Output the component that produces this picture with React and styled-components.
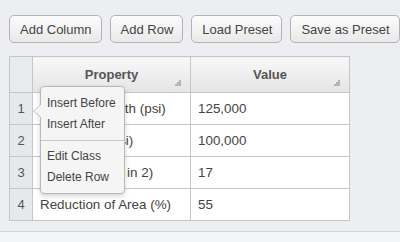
import styled, { createGlobalStyle } from 'styled-components';

const GlobalStyle = createGlobalStyle`
  html, body {
    margin: 0;
    padding: 0;
    overflow: hidden;
    background: #f4f5f7;
    font-family: "Liberation Sans", Arial, sans-serif;
  }
`;

const Page = styled.div`
  height: 231px;
  background: #eceef1;
  border-bottom: 1px solid #d3d5d8;
  overflow: hidden;
`;

const Toolbar = styled.div`
  display: flex;
  gap: 8px;
  padding: 15px 9px 0;
`;

const Button = styled.button`
  flex-shrink: 0;
  height: 28px;
  padding: 0 9px 0 10px;
  border: 1px solid #b3b3b3;
  border-radius: 5px;
  background: linear-gradient(#fcfcfc, #e9e9e9);
  color: #444;
  font-family: "Liberation Sans", Arial, sans-serif;
  font-size: 13px;
  white-space: nowrap;
`;

const TableWrap = styled.div`
  position: relative;
  margin: 13px 0 0 9px;
  width: 340px;
`;

const Table = styled.table`
  border-collapse: collapse;
  table-layout: fixed;
  width: 340px;
  font-size: 13.4px;
  color: #444;
`;

const HeadCell = styled.th`
  position: relative;
  height: 35px;
  padding: 0;
  border: 1px solid #c6c6c6;
  background: ${(p) => (p.$corner ? '#e8eaed' : 'linear-gradient(#f8f8f8, #e5e5e5)')};
  color: #555;
  font-size: 13px;
  font-weight: bold;
  text-align: center;
`;

const Grip = styled.svg`
  position: absolute;
  right: 9px;
  bottom: 6px;
`;

const Row = styled.tr`
  height: 32px;
`;

const NumCell = styled.td`
  padding: 0;
  border: 1px solid #c6c6c6;
  background: #e6e8eb;
  color: #555;
  font-size: 13px;
  text-align: center;
`;

const Cell = styled.td`
  padding: 0 0 0 7px;
  border: 1px solid #c6c6c6;
  background: #fff;
  white-space: nowrap;
  overflow: hidden;
`;

const Menu = styled.div`
  position: absolute;
  left: 31px;
  top: 30px;
  width: 83px;
  padding: 6px 0 5px;
  background: #f5f5f5;
  border: 1px solid #b9b9b9;
  border-radius: 4px;
  box-shadow: 0 2px 5px rgba(0, 0, 0, 0.18);
  font-size: 12px;
  color: #444;

  &::before,
  &::after {
    content: '';
    position: absolute;
    top: 17px;
    border-style: solid;
    border-color: transparent;
  }
  &::before {
    left: -8px;
    border-width: 7px 8px 7px 0;
    border-right-color: #b9b9b9;
  }
  &::after {
    left: -7px;
    border-width: 7px 8px 7px 0;
    border-right-color: #f5f5f5;
  }
`;

const MenuItem = styled.div`
  height: 21px;
  line-height: 21px;
  padding-left: 6px;
  white-space: nowrap;
`;

const Separator = styled.div`
  height: 1px;
  margin: 5px 0;
  background: #c9c9c9;
`;

const ResizeGrip = () => (
  <Grip width="6" height="6" viewBox="0 0 6 6">
    <g fill="#b5b5b5">
      <rect x="4" y="0" width="2" height="2" />
      <rect x="2" y="2" width="2" height="2" />
      <rect x="4" y="2" width="2" height="2" />
      <rect x="0" y="4" width="2" height="2" />
      <rect x="2" y="4" width="2" height="2" />
      <rect x="4" y="4" width="2" height="2" />
    </g>
  </Grip>
);

const rows = [
  ['Tensile Strength (psi)', '125,000'],
  ['Yield Point (psi)', '100,000'],
  ['Elongation (% in 2)', '17'],
  ['Reduction of Area (%)', '55'],
];

const App = () => {
  return (
    <Page>
      <GlobalStyle />
      <Toolbar>
        <Button>Add Column</Button>
        <Button>Add Row</Button>
        <Button>Load Preset</Button>
        <Button>Save as Preset</Button>
      </Toolbar>
      <TableWrap>
        <Table>
          <colgroup>
            <col style={{ width: 23 }} />
            <col style={{ width: 158 }} />
            <col style={{ width: 159 }} />
          </colgroup>
          <thead>
            <tr>
              <HeadCell $corner />
              <HeadCell>
                Property
                <ResizeGrip />
              </HeadCell>
              <HeadCell>
                Value
                <ResizeGrip />
              </HeadCell>
            </tr>
          </thead>
          <tbody>
            {rows.map(([prop, value], i) => (
              <Row key={prop}>
                <NumCell>{i + 1}</NumCell>
                <Cell>{prop}</Cell>
                <Cell>{value}</Cell>
              </Row>
            ))}
          </tbody>
        </Table>
        <Menu>
          <MenuItem>Insert Before</MenuItem>
          <MenuItem>Insert After</MenuItem>
          <Separator />
          <MenuItem>Edit Class</MenuItem>
          <MenuItem>Delete Row</MenuItem>
        </Menu>
      </TableWrap>
    </Page>
  );
};

export default App;
